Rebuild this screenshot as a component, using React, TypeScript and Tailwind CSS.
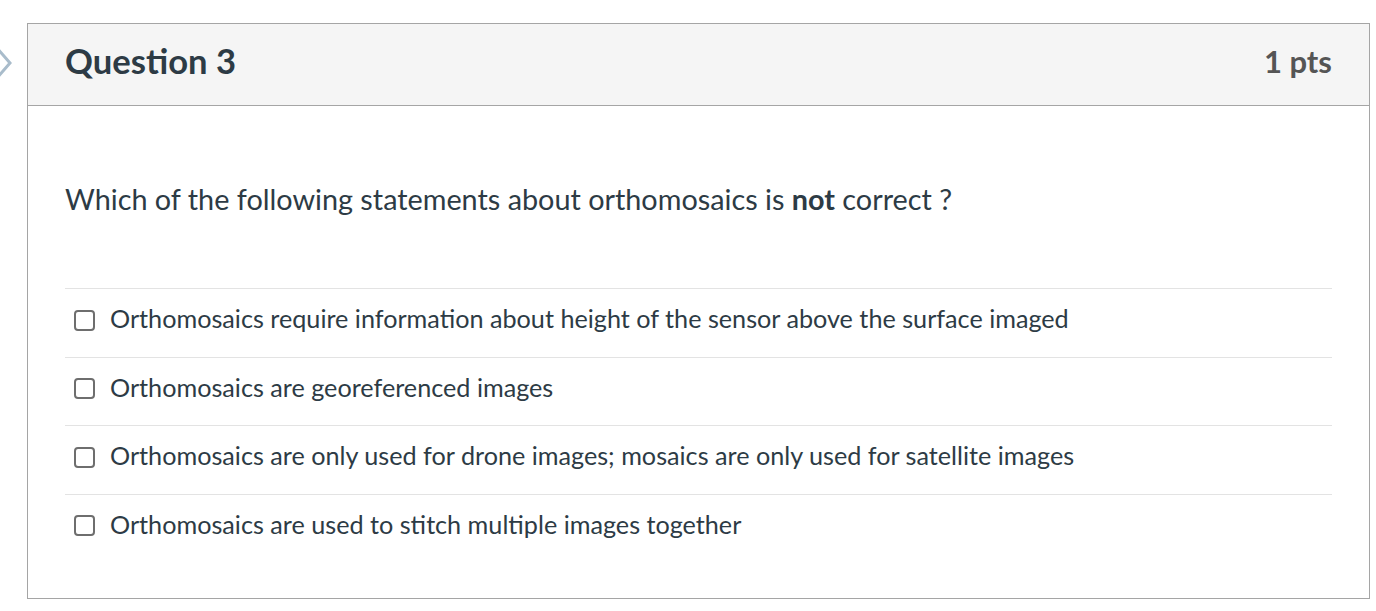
import React from "react";

const options = [
  "Orthomosaics require information about height of the sensor above the surface imaged",
  "Orthomosaics are georeferenced images",
  "Orthomosaics are only used for drone images; mosaics are only used for satellite images",
  "Orthomosaics are used to stitch multiple images together",
];

export default function App() {
  return (
    <div className="w-[1376px] h-[611px] bg-white overflow-hidden" style={{ fontFamily: "Lato, 'Open Sans', sans-serif" }}>
      <div className="flex pt-[23px]">
        <div className="w-[27px] shrink-0 relative">
          <svg className="absolute left-[-6px] top-[23px]" width="20" height="34" viewBox="0 0 20 34">
            <polyline points="3,2 16,17 3,32" fill="none" stroke="#a9bccb" strokeWidth="3" strokeLinejoin="miter" />
          </svg>
        </div>
        <div className="w-[1343px] h-[576px] border border-[#a5a5a5] flex flex-col">
          <div className="h-[82px] shrink-0 bg-[#f5f5f5] border-b border-[#a5a5a5] flex items-center justify-between px-[37px] pb-[6px]">
            <span className="text-[34.6px] font-bold text-[#2d3b45] leading-none">Question 3</span>
            <span className="text-[31px] font-bold text-[#555555] leading-none">1 pts</span>
          </div>
          <div className="px-[37px] pt-[73px]">
            <p className="text-[28.8px] text-[#2d3b45] leading-[40px]">
              Which of the following statements about orthomosaics is <strong className="font-bold">not</strong> correct ?
            </p>
            <div className="mt-[69px]">
              {options.map((o) => (
                <div key={o} className="border-t border-[#e3e3e3] h-[68.5px] flex items-center pb-[8px]">
                  <span className="ml-[9px] w-[21px] h-[21px] rounded-[4px] border-2 border-[#6e6e6e] bg-white shrink-0 mt-[3px]" />
                  <span className="ml-[15px] text-[25.2px] text-[#2d3b45] leading-none">{o}</span>
                </div>
              ))}
            </div>
          </div>
        </div>
      </div>
    </div>
  );
}
